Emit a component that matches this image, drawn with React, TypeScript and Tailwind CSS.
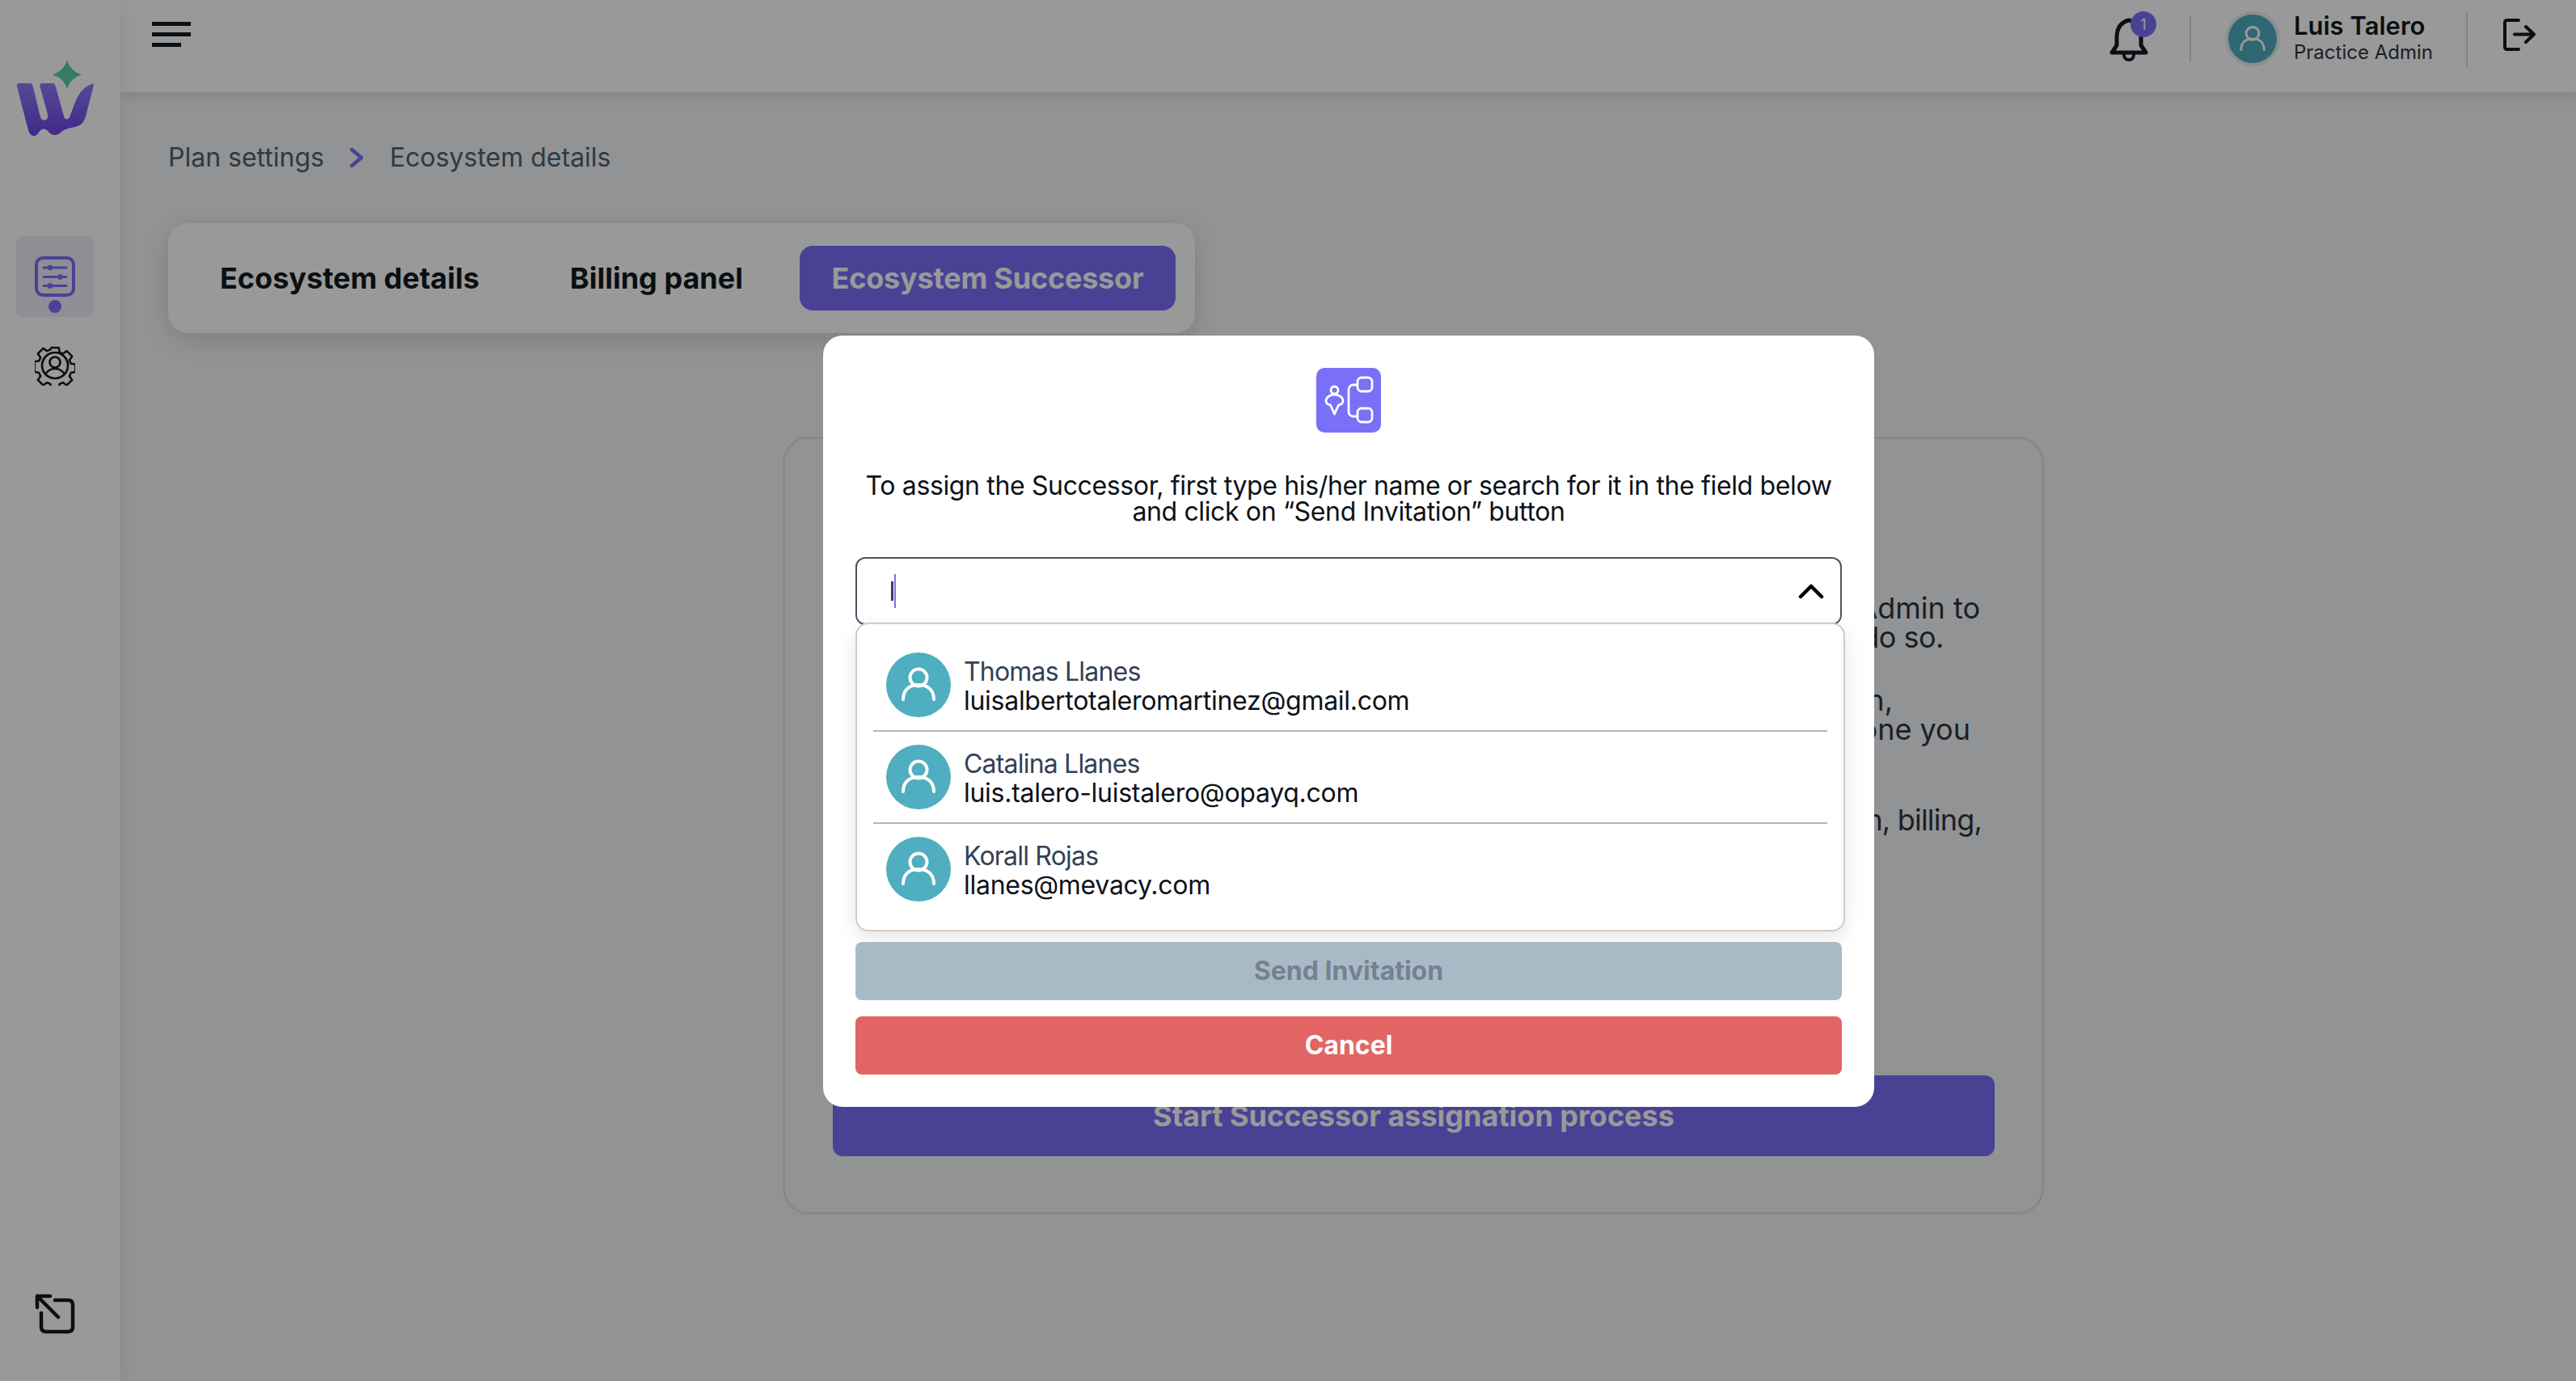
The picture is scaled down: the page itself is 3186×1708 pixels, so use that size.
import React from "react";

const font = "font-['Inter','Liberation_Sans',sans-serif]";

const UserGlyph: React.FC<{ className?: string }> = ({ className }) => (
  <svg viewBox="0 0 80 80" fill="none" stroke="currentColor" strokeWidth="4" strokeLinecap="round" className={className}>
    <circle cx="40" cy="31" r="10.5" />
    <path d="M21 58c0-12 8-18 19-18s19 6 19 18" />
  </svg>
);

const Logo = () => (
  <svg viewBox="0 0 96 96" className="w-[96px] h-[96px]">
    <defs>
      <linearGradient id="wGrad" x1="0" y1="0" x2="0" y2="1">
        <stop offset="0" stopColor="#917BF8" />
        <stop offset="1" stopColor="#6C44E6" />
      </linearGradient>
    </defs>
    <path d="M63 0c2 8 8 15 18 18.500-10 3-16 9-18 18.500-2-9.500-8-15.500-18-18.500 10-3.500 16-10.500 18-18.500z" fill="#58CFA7" />
    <path
      d="M1 33C.5 30.500 2 29 4 29H17C19 29 20 30 20.500 32L30 71C31 75 37 76 38.500 72.500 39.500 70 39 68 38 64L29.500 33C29 30.500 30 29 32 29H45C47 29 48 30 48.500 32L59 70C60 74 64 75 66 71 73 55 75 36 95 29.500 96 29 96 31 95.500 33L87 66C85 76 81 81 73 83 66 84.500 60 85 55 90 50 94.500 44 94 39 88 35 84 31 85 27 91 23 96.500 17 94 15 87Z"
      fill="url(#wGrad)"
    />
  </svg>
);

const ListSettingsIcon = () => (
  <svg viewBox="0 0 50 50" fill="none" stroke="#7B6FF7" strokeLinecap="round" className="w-[50px] h-[50px]">
    <rect x="2" y="2" width="46" height="46" rx="8" strokeWidth="4" />
    <path d="M11 14h28M11 25.500h28M11 36.500h28" strokeWidth="3" />
    <circle cx="19" cy="14" r="3" fill="#7B6FF7" />
    <circle cx="31.500" cy="25.500" r="3" fill="#7B6FF7" />
    <circle cx="19" cy="36.500" r="3" fill="#7B6FF7" />
  </svg>
);

const GearUserIcon = () => (
  <svg viewBox="0 0 50 50" fill="none" stroke="#121921" strokeWidth="2.700" strokeLinejoin="round" className="w-[50px] h-[50px]">
    <path d="M20 1.500h10l1 6 4.500 2 5-3.500 7 7-3.500 5 2 4.500 6 1v10l-6 1-2 4.500 3.500 5-7 7-5-3.500-4.500 2-1 6H20l-1-6-4.500-2-5 3.500-7-7 3.500-5-2-4.500-6-1V20l6-1 2-4.500-3.500-5 7-7 5 3.500 4.500-2z" transform="translate(1.500 1.500) scale(.94)" />
    <circle cx="25" cy="25" r="16" />
    <circle cx="25" cy="21" r="6.500" />
    <path d="M13.500 35c3-4 7-6 11.500-6s8.500 2 11.500 6" />
  </svg>
);

const ExpandIcon = () => (
  <svg viewBox="0 0 50 50" fill="none" stroke="#121921" strokeWidth="4.500" strokeLinecap="round" strokeLinejoin="round" className="w-[50px] h-[50px]">
    <path d="M3 17V3h16M3 3l26 26" />
    <path d="M25 8h16c4 0 6 2 6 6v27c0 4-2 6-6 6H14c-4 0-6-2-6-6V24" />
  </svg>
);

const BellIcon = () => (
  <svg viewBox="0 0 48 54" fill="none" stroke="#121921" strokeWidth="5" strokeLinejoin="round" strokeLinecap="round" className="w-[48px] h-[54px]">
    <path d="M24 3C13 6 9 14 9 24v10l-6 9h42l-6-9V24C39 14 35 6 24 3z" />
    <path d="M18 46c0 8 12 8 12 0" strokeWidth="4" />
  </svg>
);

const LogoutIcon = () => (
  <svg viewBox="0 0 40 40" fill="none" stroke="#121921" strokeWidth="4" strokeLinecap="round" strokeLinejoin="round" className="w-[40px] h-[40px]">
    <path d="M19 2H5C3 2 2 3 2 5v30c0 2 1 3 3 3h14" />
    <path d="M14 19.500h23M28 10l10 9.500L28 29" />
  </svg>
);

const SuccessorIcon = () => (
  <div className="w-[80px] h-[80px] rounded-[10px] bg-[#7A70F8] flex items-center justify-center">
    <svg viewBox="0 0 80 80" fill="none" stroke="#fff" strokeWidth="2.800" strokeLinejoin="round" className="w-[80px] h-[80px]">
      <circle cx="22.500" cy="27.500" r="4.500" />
      <path d="M22.500 33c-6 0-10.500 4-10.500 7.500 0 3 2.500 5 5.500 5.500l5 11 5-11c3-.5 5.500-2.500 5.500-5.500 0-3.500-4.500-7.500-10.500-7.500z" />
      <rect x="51" y="12" width="18" height="17" rx="5" />
      <rect x="51" y="50" width="18" height="17" rx="5" />
      <path d="M51 21h-5c-4 0-6 3-6 6v27c0 3 2 6 6 6h5" />
    </svg>
  </div>
);

const users = [
  { name: "Thomas Llanes", email: "luisalbertotaleromartinez@gmail.com" },
  { name: "Catalina Llanes", email: "luis.talero-luistalero@opayq.com" },
  { name: "Korall Rojas", email: "llanes@mevacy.com" },
];

const backgroundLines = [
  { text: "To start the process you need to contact the Practice Admin to", className: "pr-[18px]" },
  { text: "assign someone who can do so.", className: "pr-[63px] tracking-[-0.5px]" },
  { text: "The person you choose will take over your plan,", className: "pr-[126px] mt-[42px]" },
  { text: "so please make sure it is the right one you", className: "pr-[30px]" },
  { text: "They will have access to administration, billing,", className: "pr-[16px] mt-[76px] tracking-[-0.8px]" },
];

export default function App() {
  return (
    <div className={`relative w-[3186px] h-[1708px] overflow-hidden flex bg-[#F3F5F7] ${font}`}>
      {/* Sidebar */}
      <aside className="w-[148px] shrink-0 bg-white shadow-[0_0_24px_rgba(0,0,0,0.08)] flex flex-col items-center pt-[74px] pb-[58px] pr-[12px] z-10">
        <Logo />
        <div className="mt-[122px] w-[96px] h-[100px] rounded-[8px] bg-[#EEEDF8] flex flex-col items-center pt-[25px]">
          <ListSettingsIcon />
          <span className="mt-[4px] w-[16px] h-[16px] rounded-full bg-[#7B6FF7]" />
        </div>
        <div className="mt-[35px]">
          <GearUserIcon />
        </div>
        <div className="mt-auto">
          <ExpandIcon />
        </div>
      </aside>

      <div className="flex-1 min-w-0 flex flex-col">
        {/* Header */}
        <header className="h-[114px] shrink-0 bg-white shadow-[0_4px_16px_rgba(0,0,0,0.12)] flex items-start pl-[40px] pr-[50px] z-[5]">
          <div className="mt-[27px] flex flex-col gap-[8px]">
            <span className="block w-[48px] h-[5px] bg-[#121921]" />
            <span className="block w-[48px] h-[5px] bg-[#121921]" />
            <span className="block w-[36px] h-[5px] bg-[#121921]" />
          </div>
          <div className="ml-auto flex items-start">
            <div className="relative mt-[22px] w-[58px] h-[54px]">
              <BellIcon />
              <span className="absolute left-[26px] top-[-8px] w-[32px] h-[32px] rounded-full bg-[#7B6FF7] text-white text-[18px] flex items-center justify-center">1</span>
            </div>
            <span className="ml-[41px] mt-[20px] w-[2px] h-[56px] bg-[#D3DAE0]" />
            <div className="ml-[46px] mt-[18px] w-[60px] h-[60px] rounded-full bg-[#4FAEBF] ring-[4px] ring-[#E8EEF2] text-white">
              <UserGlyph className="w-[60px] h-[60px]" />
            </div>
            <div className="ml-[21px] w-[213px] mt-[12px]">
              <div className="text-[31px] leading-[40px] font-semibold text-[#121921] whitespace-nowrap">Luis Talero</div>
              <div className="text-[24px] leading-[26px] text-[#2C3540] whitespace-nowrap">Practice Admin</div>
            </div>
            <span className="mt-[14px] w-[2px] h-[68px] bg-[#D3DAE0]" />
            <div className="ml-[44px] mt-[23px]">
              <LogoutIcon />
            </div>
          </div>
        </header>

        {/* Page */}
        <main className="flex-1 pl-[60px] flex flex-col">
          <nav className="mt-[63px] flex items-center h-[36px] text-[32px] text-[#4E6171]">
            <span>Plan settings</span>
            <svg viewBox="0 0 16 24" fill="none" stroke="#7B6FF7" strokeWidth="4.500" strokeLinecap="round" strokeLinejoin="round" className="ml-[32px] w-[16px] h-[24px]">
              <path d="M2 2l12 10L2 22" />
            </svg>
            <span className="ml-[33px]">Ecosystem details</span>
          </nav>

          <div className="mt-[63px] w-[1270px] h-[136px] rounded-[24px] bg-white shadow-[0_8px_32px_rgba(0,0,0,0.14)] flex items-center pl-[64px] pr-[24px] text-[36px] font-bold text-[#121921]">
            <span>Ecosystem details</span>
            <span className="ml-[112px]">Billing panel</span>
            <span className="ml-auto w-[465px] h-[80px] rounded-[16px] bg-[#7B6FF7] text-white tracking-[-0.2px] flex items-center justify-center">Ecosystem Successor</span>
          </div>

          <section className="ml-[760px] mt-[128px] w-[1560px] h-[962px] rounded-[32px] border-[3px] border-[#DFE3E8] pl-[59px] pr-[58px] pt-[191px] flex flex-col text-[36px] leading-[36px] text-[#2C3540]">
            {backgroundLines.map((line) => (
              <p key={line.text} className={`text-right whitespace-nowrap ${line.className}`}>
                {line.text}
              </p>
            ))}
            <button className="mt-auto mb-[69px] h-[100px] rounded-[12px] bg-[#7B6FF7] text-white font-bold text-[36px]">
              Start Successor assignation process
            </button>
          </section>
        </main>
      </div>

      {/* Dialog */}
      <div className="absolute inset-0 z-20 bg-black/40 flex justify-center items-start pl-[150px] pt-[415px]">
        <div className="w-[1300px] h-[954px] rounded-[24px] bg-white px-[40px] pt-[40px] flex flex-col items-center">
          <SuccessorIcon />
          <p className="mt-[50px] text-[32px] leading-[32px] text-center tracking-[-0.36px] whitespace-nowrap text-[#0C1118]">
            To assign the Successor, first type his/her name or search for it in the field below
            <br />
            and click on “Send Invitation” button
          </p>
          <div className="mt-[40px] w-full h-[84px] shrink-0 rounded-[12px] border-[2px] border-[#4A5565] flex items-center pl-[42px] pr-[20px]">
            <span className="w-[3px] h-[24px] bg-[#3A4250]" />
            <span className="ml-[1px] w-[2px] h-[42px] bg-[#7A70F8]" />
            <svg viewBox="0 0 32 20" fill="none" stroke="#000" strokeWidth="4.500" strokeLinecap="round" strokeLinejoin="round" className="ml-auto w-[32px] h-[20px]">
              <path d="M3 17L16 4l13 13" />
            </svg>
          </div>
          <div className="mt-[-3px] self-start w-[1224px] h-[382px] shrink-0 rounded-[16px] border-[2px] border-[#CCCCCC] bg-white shadow-[0_8px_24px_rgba(0,0,0,0.1)] px-[20px] pt-[35px]">
            {users.map((user, index) => (
              <div key={user.email}>
                {index > 0 && <div className="h-[2px] bg-[#A9BAC7] my-[16px]" />}
                <div className="flex items-center pl-[16px] h-[80px]">
                  <div className="w-[80px] h-[80px] rounded-full bg-[#4FAEBF] text-white shrink-0">
                    <UserGlyph className="w-[80px] h-[80px]" />
                  </div>
                  <div className="ml-[16px] pt-[3px] text-[32px] leading-[36px]">
                    <div className="text-[#334155] tracking-[-0.8px]">{user.name}</div>
                    <div className="text-[#0C1118] tracking-[-0.28px]">{user.email}</div>
                  </div>
                </div>
              </div>
            ))}
          </div>
          <button className="mt-[13px] w-full h-[72px] shrink-0 rounded-[8px] bg-[#A9BAC7] text-[#75818F] font-bold text-[32px]">
            Send Invitation
          </button>
          <button className="mt-[20px] w-full h-[72px] shrink-0 rounded-[8px] bg-[#E16663] text-white font-bold text-[32px]">
            Cancel
          </button>
        </div>
      </div>
    </div>
  );
}
